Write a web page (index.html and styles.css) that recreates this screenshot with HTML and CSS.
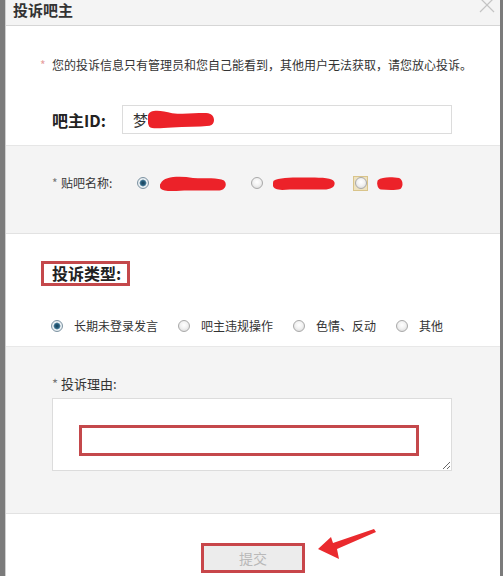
FILE: index.html
```html
<!DOCTYPE html>
<html lang="zh-CN">
<head>
<meta charset="utf-8">
<title>投诉吧主</title>
<link rel="stylesheet" href="styles.css">
</head>
<body>
<div class="dialog">
  <div class="header">
    <span class="title">投诉吧主</span>
    <svg class="close" viewBox="0 0 16 16" width="16" height="16"><line x1="1" y1="1" x2="15" y2="15"/><line x1="15" y1="1" x2="1" y2="15"/></svg>
  </div>

  <div class="sec sec1">
    <p class="notice"><span class="star">*</span>您的投诉信息只有管理员和您自己能看到，其他用户无法获取，请您放心投诉。</p>
    <div class="id-row">
      <span class="id-label">吧主ID:</span>
      <div class="id-input">梦<svg class="scribble scr-id" viewBox="0 0 100 24" preserveAspectRatio="none"><path d="M0,7 C2,-1 18,0 36,4 C56,6 76,3 90,4 C101,6 101,18 92,20 C75,22 55,21 36,22 C18,23 5,24 2,21 C-1,17 -1,11 0,7 Z"/></svg></div>
    </div>
  </div>

  <div class="sec sec2">
    <div class="bar-row">
      <span class="field-label"><span class="star2">*</span>贴吧名称:</span>
      <span class="opt opt-1"><span class="radio on"></span><svg class="scribble scr-a" viewBox="0 0 100 24" preserveAspectRatio="none"><path d="M1,12 C6,0 30,0 50,3 C70,4 88,2 97,7 C102,12 100,22 90,23 C70,24 45,22 25,24 C10,25 1,23 0,18 C-1,15 0,13 1,12 Z"/></svg></span>
      <span class="opt opt-2"><span class="radio"></span><svg class="scribble scr-b" viewBox="0 0 100 24" preserveAspectRatio="none"><path d="M1,7 C10,0 40,1 60,1 C80,1 96,2 99,9 C101,17 95,23 82,23 C60,24 35,22 15,24 C4,24 -1,20 0,14 C0,11 0,9 1,7 Z"/></svg></span>
      <span class="opt opt-3"><span class="focus"><span class="radio"></span></span><svg class="scribble scr-c" viewBox="0 0 100 24" preserveAspectRatio="none"><path d="M3,6 C20,-1 60,0 85,2 C101,5 102,18 90,22 C70,25 40,24 15,23 C1,22 -2,11 3,6 Z"/></svg></span>
    </div>
  </div>

  <div class="sec sec3">
    <div class="type-box">投诉类型:</div>
    <div class="type-row">
      <span class="topt"><span class="radio on"></span><span class="tlabel">长期未登录发言</span></span>
      <span class="topt"><span class="radio"></span><span class="tlabel">吧主违规操作</span></span>
      <span class="topt"><span class="radio"></span><span class="tlabel">色情、反动</span></span>
      <span class="topt"><span class="radio"></span><span class="tlabel">其他</span></span>
    </div>
  </div>

  <div class="sec sec4">
    <div class="reason-label"><span class="star2">*</span>投诉理由:</div>
    <div class="area-wrap">
      <textarea class="area"></textarea>
      <div class="mark-box"></div>
    </div>
  </div>

  <div class="sec sec5">
    <button class="submit" type="button">提交</button>
  </div>

  <svg class="arrow" viewBox="0 0 75 40" width="75" height="40"><polygon points="8,27 21,15 23,21 64,7 66,10 27,27 29,37"/></svg>
</div>
</body>
</html>
```

FILE: styles.css
```css
html, body {
  margin: 0;
  padding: 0;
}
body {
  background: #7b7b7b;
  font-family: "Noto Sans CJK SC", "Liberation Sans", sans-serif;
  color: #333;
}
.dialog {
  position: relative;
  margin-left: 5px;
  width: 494px;
  height: 576px;
  overflow: hidden;
  background: #fff;
  border-left: 1px solid #cfcfcf;
}
.header {
  position: relative;
  height: 26px;
  box-sizing: border-box;
  background: #f4f4f4;
  border-bottom: 1px solid #d6d6d6;
  padding-left: 7px;
  padding-top: 1px;
}
.title {
  display: block;
  font-size: 15px;
  font-weight: bold;
  line-height: 17px;
  color: #333;
}
.close {
  position: absolute;
  right: 5px;
  top: -3px;
}
.close line {
  stroke: #c4c4c4;
  stroke-width: 1.2;
}
.sec {
  box-sizing: border-box;
}
.sec1 {
  height: 120px;
  padding-top: 31px;
  border-bottom: 1px solid #e6e6e6;
}
.notice {
  margin: 0;
  padding-left: 34px;
  font-size: 12px;
  line-height: 16px;
  white-space: nowrap;
}
.star {
  display: inline-block;
  width: 12px;
  color: #e6a0a0;
}
.star2 {
  display: inline-block;
  width: 9px;
  color: #777;
}
.id-row {
  display: flex;
  align-items: center;
  margin-top: 32px;
  padding-left: 46px;
}
.id-label {
  width: 70px;
  font-size: 16px;
  font-weight: bold;
  color: #222;
}
.id-input {
  display: flex;
  align-items: center;
  width: 330px;
  height: 29px;
  box-sizing: border-box;
  border: 1px solid #dcdcdc;
  padding-left: 10px;
  font-size: 15px;
  color: #333;
  background: #fff;
}
.scribble path {
  fill: #ec2229;
}
.scr-id {
  width: 67px;
  height: 19px;
}
.sec2 {
  height: 88px;
  padding-top: 29px;
  padding-left: 46px;
  background: #f4f4f4;
  border-bottom: 1px solid #e2e2e2;
}
.bar-row {
  display: flex;
  align-items: center;
  height: 16px;
}
.field-label {
  width: 85px;
  font-size: 12px;
  line-height: 16px;
}
.opt {
  display: flex;
  align-items: center;
}
.opt-1 { width: 114px; }
.opt-2 { width: 102px; }
.radio {
  display: inline-block;
  flex: none;
  width: 12px;
  height: 12px;
  box-sizing: border-box;
  border-radius: 50%;
  border: 1px solid #a9a9a9;
  background: radial-gradient(circle at 50% 40%, #ffffff 0, #f2f2f2 45%, #d4d4d4 100%);
}
.radio.on {
  border-color: #7d93a2;
  background: radial-gradient(circle at 50% 50%, #173f58 0, #2b6382 2.4px, #7aa0b5 3.2px, #eef3f6 3.8px, #d1dce3 100%);
}
.focus {
  display: flex;
  align-items: center;
  justify-content: center;
  width: 15px;
  height: 15px;
  box-sizing: border-box;
  border: 1px solid #d9c48a;
  background: #eee2bf;
}
.scr-a { width: 66px; height: 15px; margin-left: 11px; }
.scr-b { width: 62px; height: 13px; margin-left: 10px; }
.scr-c { width: 26px; height: 13px; margin-left: 9px; }
.sec3 {
  height: 113px;
  padding-top: 27px;
  border-bottom: 1px solid #e8e8e8;
}
.type-box {
  width: 89px;
  height: 25px;
  box-sizing: border-box;
  margin-left: 35px;
  border: 3px solid #c4484b;
  padding-left: 8px;
  font-size: 16px;
  font-weight: bold;
  line-height: 19px;
  color: #222;
  white-space: nowrap;
}
.type-row {
  display: flex;
  align-items: center;
  margin-top: 32px;
  padding-left: 45px;
  height: 16px;
}
.topt {
  display: flex;
  align-items: center;
  margin-right: 20px;
}
.tlabel {
  margin-left: 11px;
  font-size: 12px;
  line-height: 16px;
  color: #333;
}
.sec4 {
  height: 167px;
  padding-top: 29px;
  padding-left: 46px;
  background: #f4f4f4;
  border-bottom: 1px solid #e2e2e2;
}
.reason-label {
  font-size: 13px;
  line-height: 16px;
}
.area-wrap {
  position: relative;
  width: 400px;
  height: 73px;
  margin-top: 6px;
}
.area {
  display: block;
  width: 400px;
  height: 73px;
  box-sizing: border-box;
  margin: 0;
  border: 1px solid #dcdcdc;
  background: #fff;
  resize: both;
  outline: none;
}
.mark-box {
  position: absolute;
  left: 27px;
  top: 27px;
  width: 340px;
  height: 31px;
  box-sizing: border-box;
  border: 3px solid #c4484b;
  pointer-events: none;
}
.sec5 {
  padding-top: 29px;
}
.submit {
  display: block;
  margin: 0 auto;
  width: 104px;
  height: 30px;
  box-sizing: border-box;
  border: 3px solid #c8464a;
  background: #ececec;
  color: #b9b9b9;
  font-family: "Noto Sans CJK SC", sans-serif;
  font-size: 14px;
  padding: 0;
}
.arrow {
  position: absolute;
  left: 304px;
  top: 522px;
}
.arrow polygon {
  fill: #ea2a2e;
}
```
